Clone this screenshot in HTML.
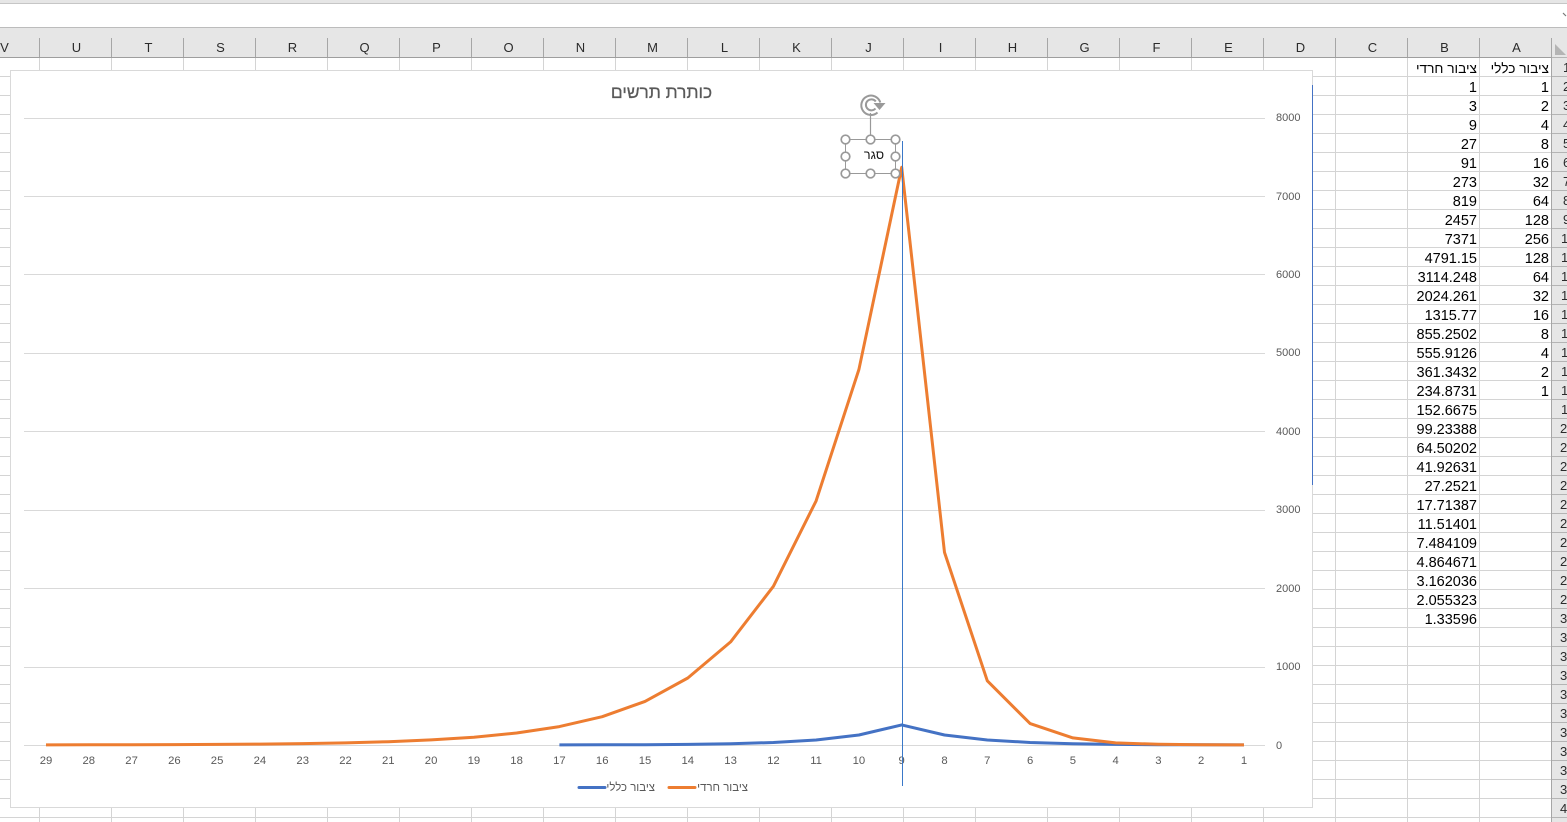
<!DOCTYPE html>
<html><head><meta charset="utf-8"><style>
html,body{margin:0;padding:0;background:#fff;width:1567px;height:822px;overflow:hidden}
svg{display:block;font-family:"Liberation Sans",sans-serif}
.c{font-size:14.5px;fill:#000;text-anchor:end}
.t{font-size:13.7px;fill:#000;text-anchor:end}
.h{font-size:13px;fill:#2b2b2b;text-anchor:middle}
.r{font-size:13px;fill:#2b2b2b}
.y{font-size:11px;fill:#595959}
.x{font-size:11.3px;fill:#595959;text-anchor:middle}
.l{font-size:11.4px;fill:#595959;text-anchor:end}
</style></head><body>
<svg width="1567" height="822" viewBox="0 0 1567 822" xmlns="http://www.w3.org/2000/svg">
<defs>
<pattern id="g" x="40" y="58" width="72" height="19" patternUnits="userSpaceOnUse"><rect x="71" width="1" height="19" fill="#d4d4d4"/><rect y="18" width="72" height="1" fill="#d4d4d4"/></pattern>
<pattern id="s" x="40" y="38" width="72" height="19" patternUnits="userSpaceOnUse"><rect x="71" width="1" height="19" fill="#a6a6a6"/></pattern>
<pattern id="rh" x="1552" y="58" width="15" height="19" patternUnits="userSpaceOnUse"><rect y="18" width="15" height="1" fill="#b4b4b4"/></pattern>
</defs>
<!-- top -->
<rect width="1567" height="3" fill="#e6e6e6"/>
<rect y="3" width="1567" height="1" fill="#c6c6c6"/>
<path d="M1563 13l3 3" stroke="#777" stroke-width="1.2" fill="none"/>
<!-- column header -->
<rect y="27" width="1567" height="30" fill="#e6e6e6"/>
<rect y="27" width="1567" height="1" fill="#bcbcbc"/>
<rect y="38" width="1552" height="19" fill="url(#s)"/>
<rect y="57" width="1552" height="1" fill="#9e9e9e"/>
<g class="hs">
<text class="h" x="4.5" y="52">V</text><text class="h" x="76.5" y="52">U</text><text class="h" x="148.5" y="52">T</text><text class="h" x="220.5" y="52">S</text><text class="h" x="292.5" y="52">R</text><text class="h" x="364.5" y="52">Q</text><text class="h" x="436.5" y="52">P</text><text class="h" x="508.5" y="52">O</text><text class="h" x="580.5" y="52">N</text><text class="h" x="652.5" y="52">M</text><text class="h" x="724.5" y="52">L</text><text class="h" x="796.5" y="52">K</text><text class="h" x="868.5" y="52">J</text><text class="h" x="940.5" y="52">I</text><text class="h" x="1012.5" y="52">H</text><text class="h" x="1084.5" y="52">G</text><text class="h" x="1156.5" y="52">F</text><text class="h" x="1228.5" y="52">E</text><text class="h" x="1300.5" y="52">D</text><text class="h" x="1372.5" y="52">C</text><text class="h" x="1444.5" y="52">B</text><text class="h" x="1516.5" y="52">A</text>
</g>
<path d="M1555 43L1567 43L1567 55L1555 55Z" fill="#e6e6e6"/>
<path d="M1555 44L1566 55L1555 55Z" fill="#b4b4b4"/>
<!-- grid -->
<rect x="0" y="58" width="1552" height="764" fill="url(#g)"/>
<!-- row header -->
<rect x="1552" y="57" width="15" height="765" fill="#e6e6e6"/>
<rect x="1552" y="58" width="15" height="764" fill="url(#rh)"/>
<rect x="1551" y="38" width="1" height="784" fill="#a6a6a6"/>
<rect x="1552" y="57" width="15" height="1" fill="#b4b4b4"/>
<g>
<text class="r" x="1563" y="72">1</text><text class="r" x="1563" y="91">2</text><text class="r" x="1563" y="110">3</text><text class="r" x="1563" y="129">4</text><text class="r" x="1563" y="148">5</text><text class="r" x="1563" y="167">6</text><text class="r" x="1563" y="186">7</text><text class="r" x="1563" y="205">8</text><text class="r" x="1563" y="224">9</text><text class="r" x="1561" y="243">10</text><text class="r" x="1561" y="262">11</text><text class="r" x="1561" y="281">12</text><text class="r" x="1561" y="300">13</text><text class="r" x="1561" y="319">14</text><text class="r" x="1561" y="338">15</text><text class="r" x="1561" y="357">16</text><text class="r" x="1561" y="376">17</text><text class="r" x="1561" y="395">18</text><text class="r" x="1561" y="414">19</text><text class="r" x="1560" y="433">20</text><text class="r" x="1560" y="452">21</text><text class="r" x="1560" y="471">22</text><text class="r" x="1560" y="490">23</text><text class="r" x="1560" y="509">24</text><text class="r" x="1560" y="528">25</text><text class="r" x="1560" y="547">26</text><text class="r" x="1560" y="566">27</text><text class="r" x="1560" y="585">28</text><text class="r" x="1560" y="604">29</text><text class="r" x="1560" y="623">30</text><text class="r" x="1560" y="642">31</text><text class="r" x="1560" y="661">32</text><text class="r" x="1560" y="680">33</text><text class="r" x="1560" y="699">34</text><text class="r" x="1560" y="718">35</text><text class="r" x="1560" y="737">36</text><text class="r" x="1560" y="756">37</text><text class="r" x="1560" y="775">38</text><text class="r" x="1560" y="794">39</text><text class="r" x="1560" y="813">40</text>
</g>
<!-- A column -->
<text class="t" x="1549" y="73">ציבור כללי</text>
<text class="c" x="1549" y="92">1</text><text class="c" x="1549" y="111">2</text><text class="c" x="1549" y="130">4</text><text class="c" x="1549" y="149">8</text><text class="c" x="1549" y="168">16</text><text class="c" x="1549" y="187">32</text><text class="c" x="1549" y="206">64</text><text class="c" x="1549" y="225">128</text><text class="c" x="1549" y="244">256</text><text class="c" x="1549" y="263">128</text><text class="c" x="1549" y="282">64</text><text class="c" x="1549" y="301">32</text><text class="c" x="1549" y="320">16</text><text class="c" x="1549" y="339">8</text><text class="c" x="1549" y="358">4</text><text class="c" x="1549" y="377">2</text><text class="c" x="1549" y="396">1</text>
<!-- B column -->
<text class="t" x="1477" y="73">ציבור חרדי</text>
<text class="c" x="1477" y="92">1</text><text class="c" x="1477" y="111">3</text><text class="c" x="1477" y="130">9</text><text class="c" x="1477" y="149">27</text><text class="c" x="1477" y="168">91</text><text class="c" x="1477" y="187">273</text><text class="c" x="1477" y="206">819</text><text class="c" x="1477" y="225">2457</text><text class="c" x="1477" y="244">7371</text><text class="c" x="1477" y="263">4791.15</text><text class="c" x="1477" y="282">3114.248</text><text class="c" x="1477" y="301">2024.261</text><text class="c" x="1477" y="320">1315.77</text><text class="c" x="1477" y="339">855.2502</text><text class="c" x="1477" y="358">555.9126</text><text class="c" x="1477" y="377">361.3432</text><text class="c" x="1477" y="396">234.8731</text><text class="c" x="1477" y="415">152.6675</text><text class="c" x="1477" y="434">99.23388</text><text class="c" x="1477" y="453">64.50202</text><text class="c" x="1477" y="472">41.92631</text><text class="c" x="1477" y="491">27.2521</text><text class="c" x="1477" y="510">17.71387</text><text class="c" x="1477" y="529">11.51401</text><text class="c" x="1477" y="548">7.484109</text><text class="c" x="1477" y="567">4.864671</text><text class="c" x="1477" y="586">3.162036</text><text class="c" x="1477" y="605">2.055323</text><text class="c" x="1477" y="624">1.33596</text>
<!-- chart -->
<rect x="10.5" y="70.5" width="1302" height="737" fill="#fff" stroke="#d9d9d9" stroke-width="1"/>
<rect x="1312" y="85" width="1" height="400" fill="#4472c4"/>
<path d="M24 118.5H1265M24 196.5H1265M24 274.5H1265M24 353.5H1265M24 431.5H1265M24 510.5H1265M24 588.5H1265M24 667.5H1265M24 745.5H1265" stroke="#d9d9d9" stroke-width="1" fill="none" shape-rendering="crispEdges"/>
<text x="661.5" y="98" text-anchor="middle" font-size="17.4" fill="#595959" stroke="#595959" stroke-width=".25">כותרת תרשים</text>
<text class="y" x="1276" y="121">8000</text><text class="y" x="1276" y="200">7000</text><text class="y" x="1276" y="278">6000</text><text class="y" x="1276" y="356">5000</text><text class="y" x="1276" y="435">4000</text><text class="y" x="1276" y="513">3000</text><text class="y" x="1276" y="592">2000</text><text class="y" x="1276" y="670">1000</text><text class="y" x="1276" y="749">0</text>
<text class="x" x="46" y="764">29</text><text class="x" x="88.8" y="764">28</text><text class="x" x="131.6" y="764">27</text><text class="x" x="174.4" y="764">26</text><text class="x" x="217.1" y="764">25</text><text class="x" x="259.9" y="764">24</text><text class="x" x="302.7" y="764">23</text><text class="x" x="345.5" y="764">22</text><text class="x" x="388.3" y="764">21</text><text class="x" x="431.1" y="764">20</text><text class="x" x="473.9" y="764">19</text><text class="x" x="516.6" y="764">18</text><text class="x" x="559.4" y="764">17</text><text class="x" x="602.2" y="764">16</text><text class="x" x="645" y="764">15</text><text class="x" x="687.8" y="764">14</text><text class="x" x="730.6" y="764">13</text><text class="x" x="773.4" y="764">12</text><text class="x" x="816.1" y="764">11</text><text class="x" x="858.9" y="764">10</text><text class="x" x="901.7" y="764">9</text><text class="x" x="944.5" y="764">8</text><text class="x" x="987.3" y="764">7</text><text class="x" x="1030.1" y="764">6</text><text class="x" x="1072.9" y="764">5</text><text class="x" x="1115.6" y="764">4</text><text class="x" x="1158.4" y="764">3</text><text class="x" x="1201.2" y="764">2</text><text class="x" x="1244" y="764">1</text>
<polyline fill="none" stroke="#4472c4" stroke-width="3" stroke-linejoin="round" points="1244,744.9 1201.2,744.8 1158.4,744.7 1115.6,744.4 1072.9,743.7 1030.1,742.5 987.3,740 944.5,735 901.7,724.9 858.9,735 816.1,740 773.4,742.5 730.6,743.7 687.8,744.4 645,744.7 602.2,744.8 559.4,744.9"/>
<polyline fill="none" stroke="#ed7d31" stroke-width="3" stroke-linejoin="round" points="1244,744.9 1201.2,744.8 1158.4,744.3 1115.6,742.9 1072.9,737.9 1030.1,723.6 987.3,680.8 944.5,552.4 901.7,167.3 858.9,369.5 816.1,500.9 773.4,586.3 730.6,641.9 687.8,678 645,701.4 602.2,716.7 559.4,726.6 516.6,733 473.9,737.2 431.1,739.9 388.3,741.7 345.5,742.9 302.7,743.6 259.9,744.1 217.1,744.4 174.4,744.6 131.6,744.8 88.8,744.8 46,744.9"/>
<rect x="902" y="141" width="1" height="645" fill="#3a78c8"/>
<!-- legend -->
<line x1="579" y1="787.5" x2="605" y2="787.5" stroke="#4472c4" stroke-width="3" stroke-linecap="round"/>
<text class="l" x="655" y="791">ציבור כללי</text>
<line x1="669" y1="787.5" x2="695" y2="787.5" stroke="#ed7d31" stroke-width="3" stroke-linecap="round"/>
<text class="l" x="748" y="791">ציבור חרדי</text>
<!-- selected textbox -->
<rect x="845.5" y="139.5" width="50" height="34" fill="none" stroke="#999" stroke-width="1"/>
<line x1="870.5" y1="139" x2="870.5" y2="113" stroke="#999" stroke-width="1.2"/>
<text x="874" y="159" text-anchor="middle" font-size="12.5" fill="#111">סגר</text>
<g fill="#fff" stroke="#999" stroke-width="1.7">
<circle cx="845.5" cy="139.5" r="4.3"/><circle cx="870.5" cy="139.5" r="4.3"/><circle cx="895.5" cy="139.5" r="4.3"/>
<circle cx="845.5" cy="156.5" r="4.3"/><circle cx="895.5" cy="156.5" r="4.3"/>
<circle cx="845.5" cy="173.5" r="4.3"/><circle cx="870.5" cy="173.5" r="4.3"/><circle cx="895.5" cy="173.5" r="4.3"/>
</g>
<!-- rotate handle -->
<g fill="none" stroke="#999" stroke-width="2">
<path d="M877.5 112.5A9.7 9.7 0 1 1 880.3 102.5"/>
<path d="M875.5 108.5A5.5 5.5 0 1 1 875.8 101.5"/>
</g>
<path d="M873.5 103L885.5 103L879.5 110Z" fill="#999"/>
</svg>
</body></html>
